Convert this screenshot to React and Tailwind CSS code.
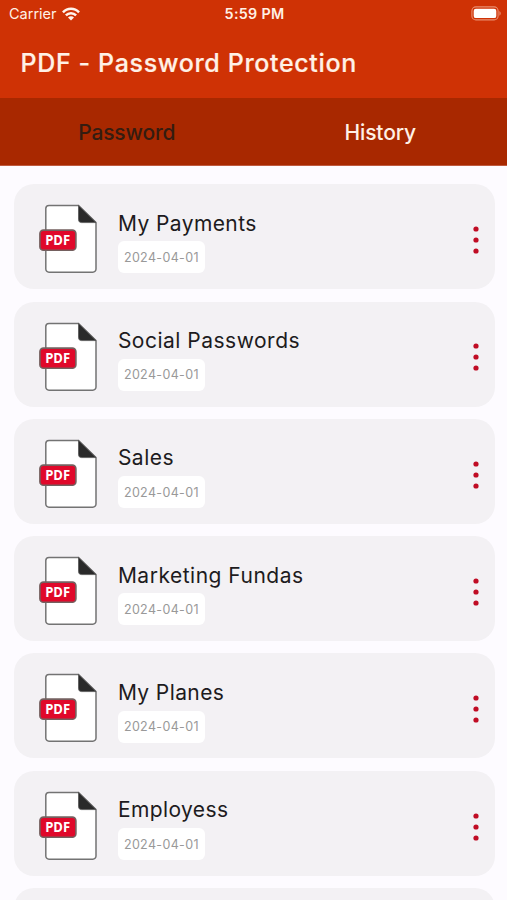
const documents = [
  { id: 1, name: 'My Payments', date: '2024-04-01', spacing: 'tracking-[0.42px]' },
  { id: 2, name: 'Social Passwords', date: '2024-04-01', spacing: 'tracking-[0.5px]' },
  { id: 3, name: 'Sales', date: '2024-04-01', spacing: 'tracking-[0.5px]' },
  { id: 4, name: 'Marketing Fundas', date: '2024-04-01', spacing: 'tracking-[0.5px]' },
  { id: 5, name: 'My Planes', date: '2024-04-01', spacing: 'tracking-[0.4px]' },
  { id: 6, name: 'Employess', date: '2024-04-01', spacing: 'tracking-[0.4px]' },
]

function WifiIcon() {
  return (
    <svg width="18" height="14" viewBox="0 0 19 14" fill="none" stroke="#fff4ec" strokeWidth="2.6">
      <path d="M1 5.3C5.8 0.2 13.2 0.2 18 5.3" />
      <path d="M4.1 8.5C7.1 5.4 11.9 5.4 14.9 8.5" />
      <path d="M9.5 13.8L6.3 10.6C8 9 11 9 12.7 10.6Z" fill="#fff4ec" stroke="none" />
    </svg>
  )
}

function BatteryIcon() {
  return (
    <svg width="31" height="15" viewBox="0 0 31 15" fill="none">
      <rect x="0.9" y="0.9" width="26.2" height="13" rx="4" stroke="#e98e70" strokeWidth="1.1" />
      <rect x="2.7" y="2.7" width="22.6" height="9.4" rx="2.2" fill="#ffffff" />
      <path d="M28.4 5C30.2 5.8 30.2 9 28.4 9.8Z" fill="#e98e70" />
    </svg>
  )
}

function DotsIcon() {
  return (
    <svg width="6" height="28" viewBox="0 0 6 28" fill="#c00c24">
      <circle cx="3" cy="3" r="2.6" />
      <circle cx="3" cy="14" r="2.6" />
      <circle cx="3" cy="25" r="2.6" />
    </svg>
  )
}

function PdfIcon() {
  return (
    <svg width="60" height="70" viewBox="0 0 60 70" className="shrink-0">
      <path
        d="M10 1.4H39.5L57 18.6V65A3.2 3.2 0 0 1 53.8 68.2H10A3.2 3.2 0 0 1 6.8 65V4.6A3.2 3.2 0 0 1 10 1.4Z"
        fill="#ffffff"
        stroke="#737373"
        strokeWidth="1.5"
      />
      <path d="M39.5 1.4L57 18.6H42.5A3 3 0 0 1 39.5 15.6Z" fill="#2a2a2a" stroke="#555555" strokeWidth="0.8" />
      <rect x="0.9" y="26.1" width="36" height="20.2" rx="3.6" fill="#e0082a" stroke="#74605f" strokeWidth="1.6" />
      <text
        x="18.7"
        y="41.2"
        textAnchor="middle"
        fill="#ffffff"
        fontFamily="Open Sans, sans-serif"
        fontSize="13.3"
        fontWeight="700"
        textLength="25"
        lengthAdjust="spacingAndGlyphs"
      >
        PDF
      </text>
    </svg>
  )
}

function DocumentCard({ name, date, spacing }) {
  return (
    <div className="flex h-[105px] shrink-0 items-start rounded-[20px] bg-[#f3f1f4] pl-[25px] pr-[16px]">
      <div className="mt-[20px]">
        <PdfIcon />
      </div>
      <div className="ml-[19.4px] mt-[24.6px] flex flex-1 flex-col items-start">
        <h2 className={`text-[21px] leading-[30px] whitespace-nowrap text-[#1d1b20] ${spacing}`}>{name}</h2>
        <span className="mt-[2.6px] flex h-[32px] w-[87px] items-center justify-center rounded-[6px] bg-white pt-[2px] text-[12.5px] tracking-[0.35px] whitespace-nowrap text-[#999999]">
          {date}
        </span>
      </div>
      <button className="mt-[41.8px]">
        <DotsIcon />
      </button>
    </div>
  )
}

export default function App() {
  return (
    <div className="h-[900px] w-[507px] overflow-hidden bg-[#fdfbff] font-['Inter',sans-serif]">
      <header className="h-[98px] bg-[#cf3205] text-[#fff1e6]">
        <div className="grid h-[28px] grid-cols-[1fr_auto_1fr] items-center pl-[9px] pr-[7px]">
          <div className="flex items-center gap-[5px]">
            <span className="text-[14.5px] leading-none">Carrier</span>
            <WifiIcon />
          </div>
          <span className="text-center text-[14.3px] leading-none font-semibold tracking-[0.3px]">5:59 PM</span>
          <div className="-mr-[2px] -mt-[1px] flex justify-end">
            <BatteryIcon />
          </div>
        </div>
        <h1 className="pl-[20.5px] pt-[17px] text-[25px] leading-[36px] font-medium tracking-[0.65px] whitespace-nowrap [-webkit-text-stroke:0.2px_#fff1e6]">
          PDF - Password Protection
        </h1>
      </header>
      <nav className="grid h-[68px] grid-cols-2 border-b border-[#bf5a3e] bg-[#a82800] text-[21px] font-medium tracking-[-0.15px]">
        <button className="pt-[2px] text-[#351c10]">Password</button>
        <button className="pt-[2px] text-[#fff1e6]">History</button>
      </nav>
      <main className="flex flex-col gap-[12.3px] pl-[13.5px] pr-[12.5px] pt-[18.3px]">
        {documents.map((doc) => (
          <DocumentCard key={doc.id} name={doc.name} date={doc.date} spacing={doc.spacing} />
        ))}
        <div className="h-[105px] shrink-0 rounded-[20px] bg-[#f3f1f4]" />
      </main>
    </div>
  )
}
